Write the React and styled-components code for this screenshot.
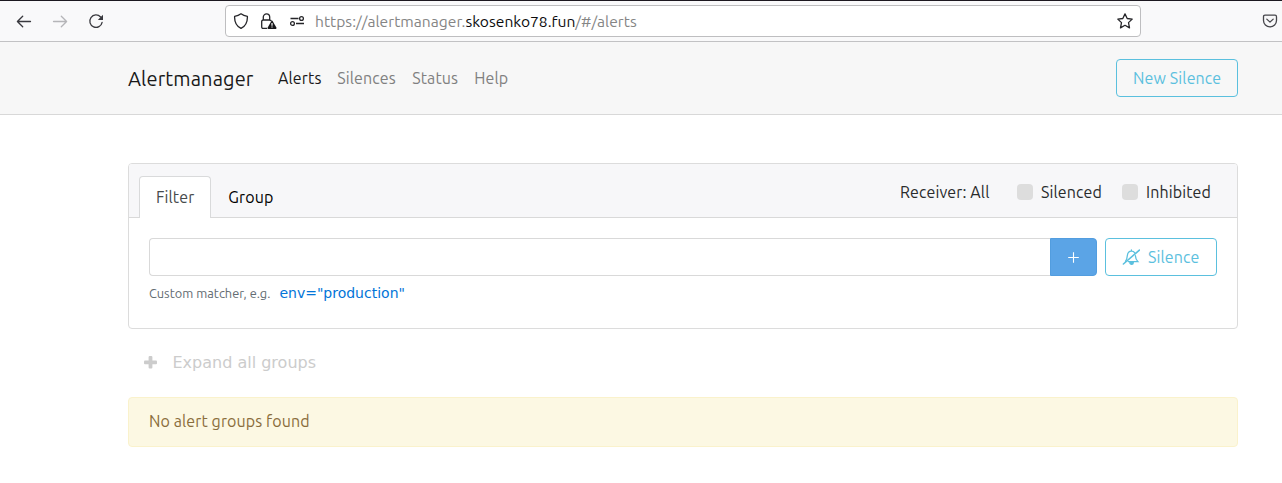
import React from "react";
import styled, { createGlobalStyle } from "styled-components";

const Global = createGlobalStyle`
  *, *::before, *::after { box-sizing: border-box; }
  body {
    margin: 0;
    background: #fff;
    font-family: "Ubuntu", "Noto Sans", sans-serif;
    font-size: 16px;
    line-height: 24px;
    letter-spacing: 0.12px;
    color: #292b2c;
    overflow: hidden;
  }
  svg { display: block; flex: none; }
`;

const Text = styled.span`
  display: block;
  flex: none;
  white-space: nowrap;
  width: ${(p) => (p.$w ? `${p.$w}px` : "auto")};
`;

const BrowserBar = styled.header`
  height: 42px;
  display: flex;
  align-items: center;
  background: #f9f9fa;
  border-top: 1px solid #1c1820;
  border-bottom: 1px solid #c2c2c4;
  padding: 0 4px 0 16px;
`;

const HistoryButtons = styled.div`
  display: flex;
  gap: 20px;
  width: 209px;
`;

const AddressBar = styled.div`
  width: 916px;
  height: 32px;
  display: flex;
  align-items: center;
  border: 1px solid #bebec0;
  border-radius: 4px;
  background: #fff;
  padding: 0 7px;
`;

const SiteIcons = styled.div`
  display: flex;
  gap: 12px;
  width: 82px;
`;

const Url = styled.div`
  display: flex;
  flex: 1;
  font-size: 15.6px;
  letter-spacing: 0.02px;
  color: #858585;
`;

const Host = styled(Text)`
  color: #0c0c0d;
`;

const PocketSlot = styled.div`
  margin-left: 121px;
`;

const NavBar = styled.nav`
  height: 73px;
  display: flex;
  align-items: center;
  padding: 0 44px 1px 128px;
  background: #f7f7f7;
  border-bottom: 1px solid #d8d8d8;
`;

const Brand = styled(Text)`
  width: 126px;
  font-size: 20px;
  line-height: 30px;
  padding-top: 2px;
  color: #191919;
  margin-right: 24px;
`;

const NavLinks = styled.div`
  display: flex;
  gap: 16px;
  flex: 1;
`;

const NavLink = styled(Text)`
  color: ${(p) => (p.$active ? "#191919" : "#808080")};
`;

const OutlineButton = styled.button`
  display: flex;
  align-items: center;
  justify-content: flex-start;
  gap: 8px;
  flex: none;
  width: ${(p) => p.$width}px;
  height: 38px;
  padding: 0 16px;
  font: inherit;
  letter-spacing: inherit;
  color: #5bc0de;
  background: transparent;
  border: 1px solid #5bc0de;
  border-radius: 4px;
`;

const Page = styled.main`
  margin: 48px 44px 0 128px;
`;

const Card = styled.section`
  height: 166px;
  border: 1px solid #dcdcdc;
  border-radius: 4px;
  background: #fff;
`;

const CardHeader = styled.div`
  height: 54px;
  display: flex;
  align-items: flex-end;
  background: #f7f7f9;
  border-bottom: 1px solid #d9d9d9;
  border-radius: 3px 3px 0 0;
  padding: 0 26px 0 10px;
`;

const Tab = styled.div`
  height: 42px;
  margin-bottom: -1px;
  padding: 8px 16px;
  border: 1px solid ${(p) => (p.$active ? "#d9dadb" : "transparent")};
  border-bottom: 0;
  border-radius: 4px 4px 0 0;
  background: ${(p) => (p.$active ? "#fff" : "transparent")};
  color: ${(p) => (p.$active ? "#464a4c" : "#000")};
`;

const Options = styled.div`
  display: flex;
  align-items: center;
  margin: 0 0 13px auto;
`;

const CheckBox = styled.span`
  width: 16px;
  height: 16px;
  border-radius: 4px;
  background: #ddd;
  margin: 0 8px 0 ${(p) => p.$before}px;
`;

const CardBody = styled.div`
  padding: 20px;
`;

const InputRow = styled.div`
  display: flex;
`;

const MatcherInput = styled.input`
  flex: 1;
  min-width: 0;
  height: 38px;
  border: 1px solid #d9d9d9;
  border-right: 0;
  border-radius: 4px 0 0 4px;
  outline: none;
`;

const AddButton = styled.button`
  width: 47px;
  height: 38px;
  display: flex;
  align-items: center;
  justify-content: center;
  padding: 0 1px 0 0;
  margin-right: 8px;
  background: #5ba4e6;
  border: 1px solid #529ddf;
  border-radius: 0 4px 4px 0;
`;

const Hint = styled.div`
  display: flex;
  align-items: center;
  margin-top: 5px;
  font-size: 12.8px;
  letter-spacing: 0.02px;
  color: #636c72;
`;

const Example = styled(Text)`
  font-family: "DejaVu Sans", sans-serif;
  font-size: 14px;
  letter-spacing: 0;
  color: #0275d8;
`;

const ExpandRow = styled.div`
  display: flex;
  align-items: center;
  gap: 15.5px;
  height: 24px;
  margin: 22px 0 22px 16px;
  font-family: "DejaVu Sans", sans-serif;
  font-size: 16px;
  letter-spacing: 0;
  color: #ccc;
`;

const Notice = styled.div`
  height: 50px;
  padding: 11px 20px;
  background: #fcf8e3;
  border: 1px solid #faf2cc;
  border-radius: 4px;
  color: #8a6d3b;
  letter-spacing: 0.1px;
`;

const Arrow = ({ color, flip }) => (
  <svg width="16" height="16" viewBox="0 0 16 16" fill="none" stroke={color} strokeWidth="1.3" strokeLinecap="round" strokeLinejoin="round">
    <path d={flip ? "M1.5 8.5h13M9.3 3.2 14.6 8.5l-5.3 5.3" : "M14.5 8.5h-13M6.7 3.2 1.4 8.5l5.3 5.3"} />
  </svg>
);

const Reload = () => (
  <svg width="16" height="16" viewBox="0 0 16 16">
    <path d="M12.6 4A6.2 6.2 0 1 0 14.1 9.3" fill="none" stroke="#39393e" strokeWidth="1.3" strokeLinecap="round" />
    <path d="M15 1.7v5.2H9.8z" fill="#39393e" />
  </svg>
);

const Shield = () => (
  <svg width="16" height="16" viewBox="0 0 16 16" fill="none" stroke="#252529" strokeWidth="1.3" strokeLinejoin="round">
    <path d="M8 .8c2 1.5 4.2 2.2 6.4 2.6C14.6 9 12.7 13 8 15.3 3.3 13 1.4 9 1.6 3.4 3.8 3 6 2.3 8 .8Z" />
  </svg>
);

const LockWarning = () => (
  <svg width="16" height="16" viewBox="0 0 16 16">
    <path d="M6.2 15.3H2.2Q.7 15.3 .7 13.8V8.5Q.7 7 2.2 7H8.5Q10 7 10.2 8M2.3 7V4.1a3.2 3.2 0 0 1 6.4 0V7" fill="none" stroke="#252529" strokeWidth="1.3" />
    <path d="M10.4 7.9q.6-.7 1.2 0l3.9 6.9q.2.9-.7 1.2H7.3q-.9-.3-.7-1.2z" fill="#18181b" />
    <path d="M11 10v2.8M11 13.6v1" stroke="#fff" strokeWidth="1.2" />
  </svg>
);

const Permissions = () => (
  <svg width="16" height="16" viewBox="0 0 16 16" fill="none" stroke="#252529" strokeWidth="1.3">
    <path d="M1.5 5.5h8M7 10.5h8" />
    <circle cx="12.5" cy="5.5" r="1.9" />
    <circle cx="3.5" cy="10.5" r="1.9" />
  </svg>
);

const Star = () => (
  <svg width="16" height="16" viewBox="0 0 16 16" fill="none" stroke="#252529" strokeWidth="1.3" strokeLinejoin="round">
    <path d="M8 .9 10.2 5.5l5 .6-3.7 3.5 1 5.3L8 12.3l-4.5 2.6 1-5.3L.8 6.1l5-.6z" />
  </svg>
);

const Pocket = () => (
  <svg width="16" height="16" viewBox="0 0 16 16" fill="none" stroke="#46464b" strokeWidth="1.3" strokeLinecap="round" strokeLinejoin="round">
    <path d="M3 2.2h10q1.5 0 1.5 1.5V7.5a6.5 6.3 0 0 1-13 0V3.7q0-1.5 1.5-1.5Z" />
    <path d="M4.8 6.1 8 9.1l3.2-3" />
  </svg>
);

const BellSlash = () => (
  <svg width="18" height="18" viewBox="0 0 18 18" fill="none" stroke="#5bc0de" strokeWidth="1.3" strokeLinecap="round">
    <path d="M1.4 16 17.4 2.1" strokeWidth="1.6" />
    <path d="M3.5 13.2C5 11.5 5.2 9.5 5.4 7.3 5.7 4.5 7.2 3.2 9.4 3.2c1.500 0 2.700.6 3.300 1.700M13.400 7.700c.1 2.400.9 4.200 2.500 5.900H6.200M9.400 3.200V1.900" />
    <path d="M7.900 14.7a1.700 1.700 0 0 0 3.400 0z" fill="#5bc0de" />
  </svg>
);

const AddIcon = () => (
  <svg width="12" height="12" viewBox="0 0 12 12">
    <path d="M6.5 1.2v10.600M1.200 6.500h10.600" stroke="#fff" strokeWidth="1.1" />
  </svg>
);

const BoldPlus = () => (
  <svg width="13" height="15" viewBox="0 0 13 15" fill="#ccc">
    <rect x="4.6" y="0" width="3.800" height="12.600" rx="1" />
    <rect x="0" y="4.400" width="13" height="3.800" rx="1" />
  </svg>
);

export default function App() {
  return (
    <>
      <Global />
      <BrowserBar>
        <HistoryButtons>
          <Arrow color="#39393e" />
          <Arrow color="#b5b5b8" flip />
          <Reload />
        </HistoryButtons>
        <AddressBar>
          <SiteIcons>
            <Shield />
            <LockWarning />
            <Permissions />
          </SiteIcons>
          <Url>
            <Text>https://alertmanager.</Text>
            <Host>skosenko78.fun</Host>
            <Text>/#/alerts</Text>
          </Url>
          <Star />
        </AddressBar>
        <PocketSlot>
          <Pocket />
        </PocketSlot>
      </BrowserBar>
      <NavBar>
        <Brand>Alertmanager</Brand>
        <NavLinks>
          <NavLink $w={43.2} $active>Alerts</NavLink>
          <NavLink $w={59}>Silences</NavLink>
          <NavLink $w={46}>Status</NavLink>
          <NavLink $w={34}>Help</NavLink>
        </NavLinks>
        <OutlineButton $width={122}>
          <Text>New Silence</Text>
        </OutlineButton>
      </NavBar>
      <Page>
        <Card>
          <CardHeader>
            <Tab $active>
              <Text $w={38.3}>Filter</Text>
            </Tab>
            <Tab>
              <Text $w={45}>Group</Text>
            </Tab>
            <Options>
              <Text $w={89}>Receiver: All</Text>
              <CheckBox $before={28} />
              <Text $w={61}>Silenced</Text>
              <CheckBox $before={20} />
              <Text $w={65}>Inhibited</Text>
            </Options>
          </CardHeader>
          <CardBody>
            <InputRow>
              <MatcherInput aria-label="Matcher" />
              <AddButton aria-label="Add matcher">
                <AddIcon />
              </AddButton>
              <OutlineButton $width={112}>
                <BellSlash />
                <Text>Silence</Text>
              </OutlineButton>
            </InputRow>
            <Hint>
              <Text $w={130.4}>Custom matcher, e.g.</Text>
              <Example>env="production"</Example>
            </Hint>
          </CardBody>
        </Card>
        <ExpandRow>
          <BoldPlus />
          <Text>Expand all groups</Text>
        </ExpandRow>
        <Notice>
          <Text>No alert groups found</Text>
        </Notice>
      </Page>
    </>
  );
}
